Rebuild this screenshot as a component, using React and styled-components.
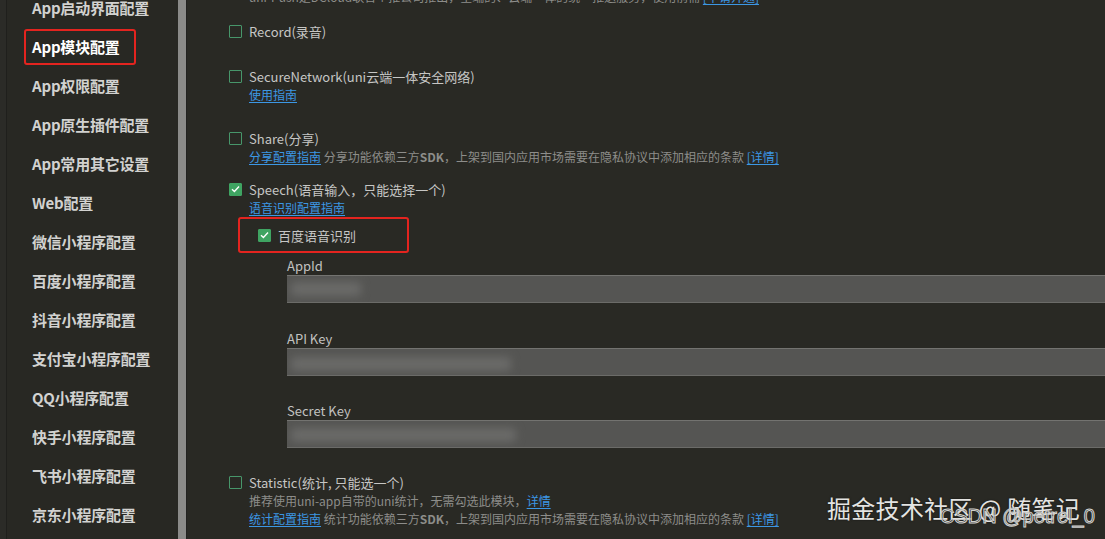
import React from "react";
import styled, { createGlobalStyle } from "styled-components";

const Global = createGlobalStyle`
  html, body { margin: 0; padding: 0; background: #292924; }
  body { font-family: "Noto Sans CJK SC", "Noto Sans", sans-serif; overflow: hidden; }
  * { box-sizing: border-box; }
`;

const Page = styled.div`
  position: relative;
  display: flex;
  width: 1105px;
  height: 539px;
  overflow: hidden;
  background: #292924;
`;

const Sidebar = styled.nav`
  width: 178px;
  flex: none;
  background: #282823;
  border-left: 6px solid #2b2b27;
  box-shadow: inset 1px 0 0 #1f1f1c;
  overflow: hidden;
`;

const NavList = styled.ul`
  list-style: none;
  margin: -12px 0 0 0;
  padding: 0 0 0 18px;
  display: flex;
  flex-direction: column;
`;

const NavItem = styled.li`
  height: 39px;
  display: flex;
  align-items: center;
`;

const NavLabel = styled.span`
  display: inline-flex;
  align-items: center;
  height: 36px;
  padding: ${(p) => (p.$active ? "0 14px 0 6px" : "0 6px")};
  margin-left: ${(p) => (p.$active ? "0" : "2px")};
  border: ${(p) => (p.$active ? "2px solid #e3241f" : "none")};
  border-radius: 3px;
  font-size: 15px;
  font-weight: 700;
  color: ${(p) => (p.$active ? "#ffffff" : "#d2d2d0")};
  white-space: nowrap;
  letter-spacing: -0.2px;
`;

const Scrollbar = styled.div`
  width: 9px;
  flex: none;
  background: #8b8b89;
  border-right: 1px solid #222220;
`;

const Main = styled.main`
  flex: 1;
  min-width: 0;
  padding-left: 42px;
  display: flex;
  flex-direction: column;
  color: #c6c6c4;
  overflow: hidden;
`;

const TopDesc = styled.div`
  margin-top: -12px;
  padding-left: 20px;
  font-size: 12px;
  line-height: 18px;
  color: #8d8d8a;
  white-space: nowrap;
`;

const Module = styled.section`
  margin-top: ${(p) => p.$mt}px;
  display: flex;
  flex-direction: column;
`;

const Row = styled.label`
  display: flex;
  align-items: center;
  gap: 7px;
  height: 18px;
  font-size: 13px;
  color: #c6c6c4;
  white-space: nowrap;
`;

const Box = styled.span`
  width: 13px;
  height: 13px;
  flex: none;
  display: inline-flex;
  align-items: center;
  justify-content: center;
  border: 1px solid ${(p) => (p.$checked ? "#3fa462" : "#47966a")};
  background: ${(p) => (p.$checked ? "#3fa462" : "transparent")};
  border-radius: 1px;
`;

const Sub = styled.div`
  margin-top: 1px;
  padding-left: 20px;
  display: flex;
  flex-direction: column;
`;

const Line = styled.div`
  font-size: 12px;
  line-height: 18px;
  color: #8d8d8a;
  white-space: nowrap;
`;

const Link = styled.a`
  color: #3c97e4;
  text-decoration: underline;
  text-underline-offset: 2px;
  cursor: pointer;
`;

const Bold = styled.b`
  font-weight: 700;
`;

const Highlight = styled.div`
  margin-left: -11px;
  width: 171px;
  height: 36px;
  border: 2px solid #e3241f;
  border-radius: 3px;
  display: flex;
  align-items: center;
  padding-left: 18px;
  font-size: 13px;
`;

const Fields = styled.div`
  padding-left: 38px;
  display: flex;
  flex-direction: column;
`;

const Field = styled.div`
  margin-top: ${(p) => p.$mt}px;
  display: flex;
  flex-direction: column;
`;

const FieldLabel = styled.div`
  font-size: 13px;
  line-height: 18px;
  color: #c2c2c0;
`;

const Input = styled.div`
  height: 28px;
  margin-right: -10px;
  background: #555553;
  border-top: 1px solid #737370;
  border-bottom: 1px solid #6b6b68;
  display: flex;
  align-items: center;
  padding-left: 4px;
  overflow: hidden;
`;

const Blur = styled.span`
  display: inline-block;
  height: ${(p) => p.$h || 14}px;
  width: ${(p) => p.$w}px;
  margin-top: ${(p) => p.$dy || 0}px;
  background: #6a6a68;
  filter: blur(4px);
  border-radius: 4px;
`;

const Watermark = styled.div`
  position: absolute;
  left: 827px;
  top: 490px;
  font-size: 24px;
  color: #e4e4e2;
  white-space: nowrap;
  letter-spacing: 0.3px;
  text-shadow: 0 0 2px rgba(0,0,0,0.6);
`;

const Watermark2 = styled.div`
  position: absolute;
  left: 940px;
  top: 505px;
  font-family: "Liberation Sans", sans-serif;
  font-size: 20px;
  color: rgba(41, 41, 36, 0.5);
  -webkit-text-stroke: 1px #d2d2d0;
  white-space: nowrap;
`;

const Check = () => (
  <svg width="9" height="8" viewBox="0 0 9 8">
    <path d="M1 4.2 L3.4 6.4 L8 1.6" fill="none" stroke="#ffffff" strokeWidth="1.4" />
  </svg>
);

const CheckBox = ({ checked }) => <Box $checked={checked}>{checked && <Check />}</Box>;

const navItems = [
  "App启动界面配置",
  "App模块配置",
  "App权限配置",
  "App原生插件配置",
  "App常用其它设置",
  "Web配置",
  "微信小程序配置",
  "百度小程序配置",
  "抖音小程序配置",
  "支付宝小程序配置",
  "QQ小程序配置",
  "快手小程序配置",
  "飞书小程序配置",
  "京东小程序配置",
];

export default function App() {
  return (
    <>
      <Global />
      <Page>
        <Sidebar>
          <NavList>
            {navItems.map((t) => (
              <NavItem key={t}>
                <NavLabel $active={t === "App模块配置"}>{t}</NavLabel>
              </NavItem>
            ))}
          </NavList>
        </Sidebar>
        <Scrollbar />
        <Main>
          <TopDesc>
            uni-Push是DCloud联合个推公司推出，全端的、云端一体的统一推送服务，使用前需 <Link>[申请开通]</Link>
          </TopDesc>

          <Module $mt={16}>
            <Row>
              <CheckBox />
              Record(录音)
            </Row>
          </Module>

          <Module $mt={27}>
            <Row>
              <CheckBox />
              SecureNetwork(uni云端一体安全网络)
            </Row>
            <Sub>
              <Line>
                <Link>使用指南</Link>
              </Line>
            </Sub>
          </Module>

          <Module $mt={25}>
            <Row>
              <CheckBox />
              Share(分享)
            </Row>
            <Sub>
              <Line>
                <Link>分享配置指南</Link> 分享功能依赖三方<Bold>SDK</Bold>，上架到国内应用市场需要在隐私协议中添加相应的条款 <Link>[详情]</Link>
              </Line>
            </Sub>
          </Module>

          <Module $mt={14}>
            <Row>
              <CheckBox checked />
              Speech(语音输入，只能选择一个)
            </Row>
            <Sub>
              <Line>
                <Link>语音识别配置指南</Link>
              </Line>
              <Highlight>
                <Row>
                  <CheckBox checked />
                  百度语音识别
                </Row>
              </Highlight>
              <Fields>
                <Field $mt={4}>
                  <FieldLabel>AppId</FieldLabel>
                  <Input>
                    <Blur $w={70} />
                  </Input>
                </Field>
                <Field $mt={27}>
                  <FieldLabel>API Key</FieldLabel>
                  <Input>
                    <Blur $w={220} $dy={4} />
                  </Input>
                </Field>
                <Field $mt={26}>
                  <FieldLabel>Secret Key</FieldLabel>
                  <Input>
                    <Blur $w={225} $dy={2} />
                  </Input>
                </Field>
              </Fields>
            </Sub>
          </Module>

          <Module $mt={25}>
            <Row>
              <CheckBox />
              Statistic(统计, 只能选一个)
            </Row>
            <Sub>
              <Line>
                推荐使用uni-app自带的uni统计，无需勾选此模块，<Link>详情</Link>
              </Line>
              <Line>
                <Link>统计配置指南</Link> 统计功能依赖三方<Bold>SDK</Bold>，上架到国内应用市场需要在隐私协议中添加相应的条款 <Link>[详情]</Link>
              </Line>
            </Sub>
          </Module>
        </Main>
        <Watermark>掘金技术社区 @ 随笔记</Watermark>
        <Watermark2>CSDN @petrel_0</Watermark2>
      </Page>
    </>
  );
}
